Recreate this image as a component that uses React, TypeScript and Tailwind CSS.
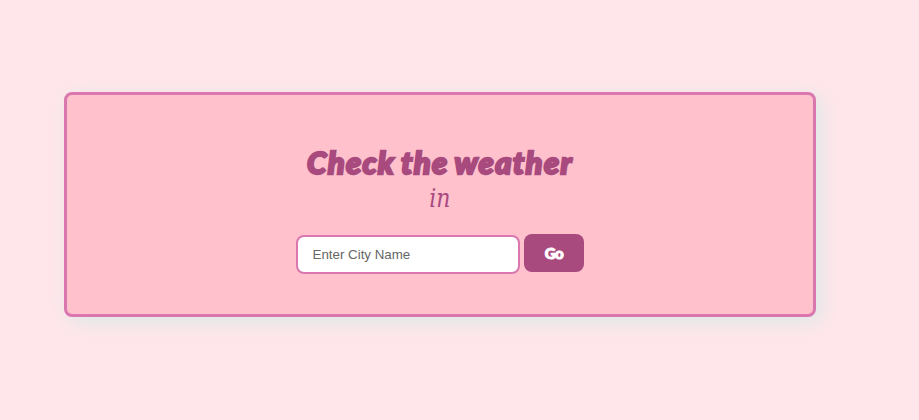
export default function App() {
  return (
    <main className="flex h-[420px] w-[919px] items-start bg-[#ffe6ea] pl-16 pt-[92px] text-[#a94a7f]">
      <section className="flex h-[225px] w-[752px] flex-col items-center rounded-lg border-3 border-[#d977ae] bg-[#ffc2cd] pt-[46px] shadow-[5px_5px_20px_#dbe9e8]">
        <h1 className="whitespace-nowrap font-['Lato',sans-serif] text-[31px] font-black italic leading-[42px] tracking-[1.35px] [-webkit-text-stroke:2.3px_#a94a7f] [word-spacing:-2px]">
          Check the weather
        </h1>
        <p className="origin-center scale-x-[0.83] pt-px font-['DejaVu_Serif',serif] text-[26.5px] italic leading-[28px]">in</p>
        <form className="mt-[22px] flex items-start gap-1" onSubmit={(e) => e.preventDefault()}>
          <input
            type="text"
            placeholder="Enter City Name"
            className="mt-[1px] h-[39px] w-[224px] rounded-lg border-2 border-[#d977ae] bg-white pl-[14.5px] pr-[15px] pb-px font-['Liberation_Sans',Arial,sans-serif] text-[13.333px] text-[#333333] placeholder:text-[#666666] focus:outline-none"
          />
          <button
            type="submit"
            className="h-[38px] w-[60px] rounded-lg bg-[#a94a7f] font-['Lato',sans-serif] text-[15px] font-black tracking-[-0.4px] text-white [-webkit-text-stroke:1px_white]"
          >
            Go
          </button>
        </form>
      </section>
    </main>
  );
}
